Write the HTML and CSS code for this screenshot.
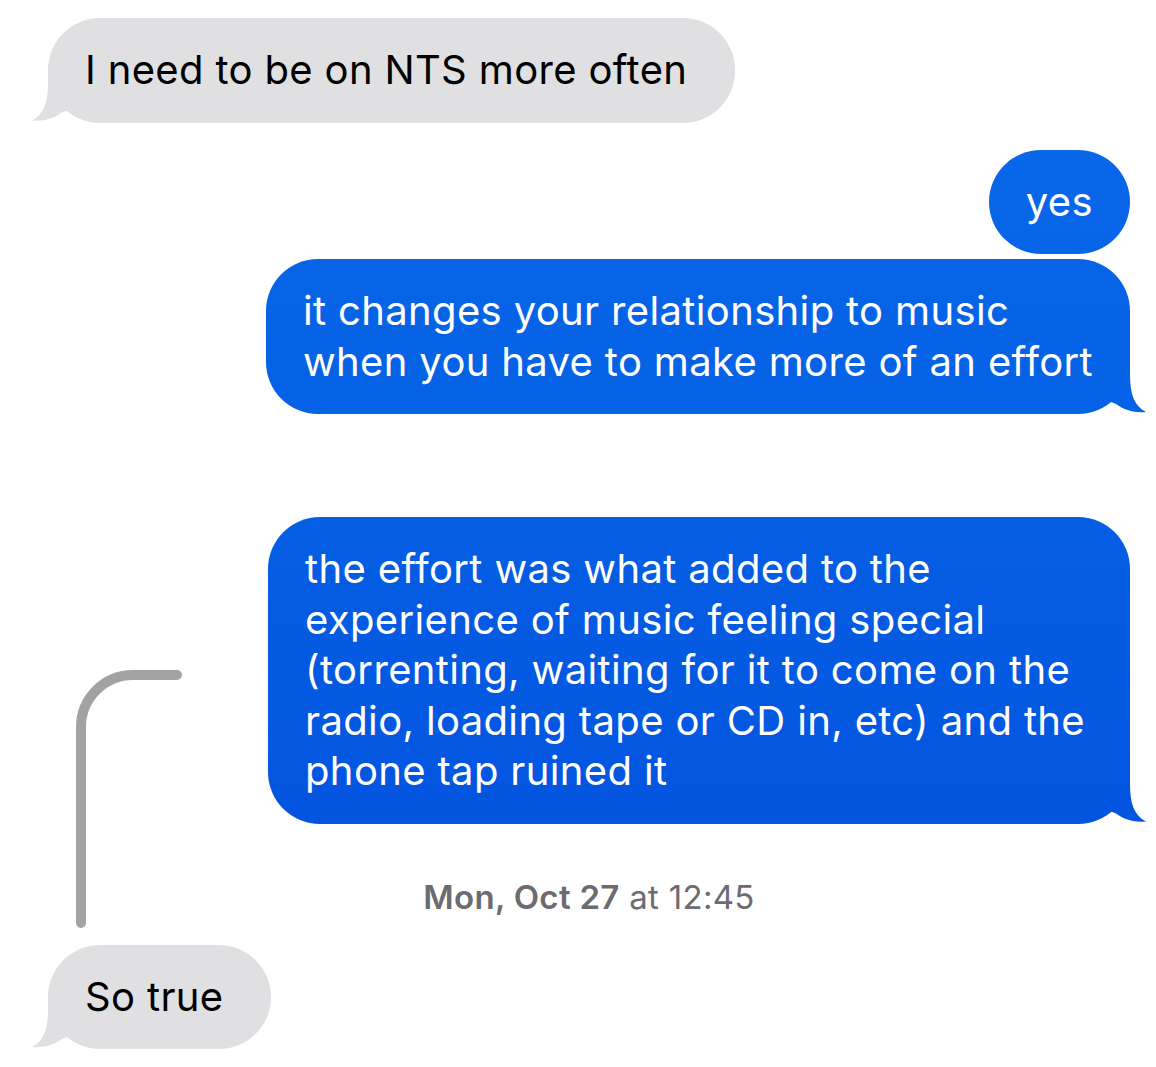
FILE: index.html
```html
<!DOCTYPE html>
<html lang="en">
<head>
<meta charset="utf-8">
<title>Messages</title>
<link rel="stylesheet" href="styles.css">
</head>
<body>
<div class="thread">
  <div class="row row-in first">
    <div class="bubble bubble-in tail">I need to be on NTS more often</div>
  </div>
  <div class="row row-out gap-group">
    <div class="bubble bubble-out">yes</div>
  </div>
  <div class="row row-out gap-tight">
    <div class="bubble bubble-out tail">it changes your relationship to music<br>when you have to make more of an effort</div>
  </div>
  <div class="row row-out gap-reply">
    <div class="bubble bubble-out bubble-wide tail">the effort was what added to the<br>experience of music feeling special<br>(torrenting, waiting for it to come on the<br>radio, loading tape or CD in, etc) and the<br>phone tap ruined it</div>
  </div>
  <div class="stamp"><span class="stamp-day">Mon, Oct 27</span> at 12:45</div>
  <div class="row row-in gap-after-stamp">
    <div class="bubble bubble-in tail">So true</div>
  </div>
  <svg class="reply-line" width="200" height="280" viewBox="0 660 200 280" aria-hidden="true">
    <path d="M177 675 H133 A52 52 0 0 0 81 727 V923" fill="none" stroke="#a2a2a4" stroke-width="10" stroke-linecap="round"/>
  </svg>
</div>
</body>
</html>
```
FILE: styles.css
```css
html, body {
  margin: 0;
  padding: 0;
  background: #ffffff;
}

body {
  font-family: Inter, "Noto Sans", "Liberation Sans", sans-serif;
  -webkit-font-smoothing: antialiased;
}

.thread {
  position: relative;
  display: flex;
  flex-direction: column;
  padding: 18px 26px 0 48px;
  min-height: 1067px;
  box-sizing: border-box;
}

.row {
  display: flex;
}

.row-in {
  justify-content: flex-start;
}

.row-out {
  justify-content: flex-end;
}

.gap-group {
  margin-top: 27px;
}

.gap-tight {
  margin-top: 5px;
}

.gap-reply {
  margin-top: 103px;
}

.gap-after-stamp {
  margin-top: 28px;
}

.bubble {
  position: relative;
  font-size: 40px;
  line-height: 50.5px;
  letter-spacing: 0.35px;
  border-radius: 52px;
  padding: 27px 0;
  white-space: nowrap;
}

.bubble-in {
  background: #e0e0e3;
  color: #000000;
  padding-left: 37px;
  padding-right: 48px;
}

.bubble-out {
  background: linear-gradient(180deg, #0b6aea 0%, #0561e5 40%, #024ddb 100%) fixed;
  color: #ffffff;
  padding-left: 37px;
  padding-right: 37px;
}

.bubble-wide {
  padding-right: 45px;
}

.tail::after {
  content: "";
  position: absolute;
  bottom: 0;
  width: 40px;
  height: 56px;
}

.bubble-in.tail::after {
  left: -16px;
  background: #e0e0e3;
  clip-path: path("M16 0 L16 16 C16 36 12 48 0 54 C12 55 22 52 30 46 L40 42 L40 0 Z");
}

.bubble-out.tail::after {
  right: -16px;
  background: linear-gradient(180deg, #0b6aea 0%, #0561e5 40%, #024ddb 100%) fixed;
  clip-path: path("M24 0 L24 16 C24 36 28 48 40 54 C28 55 18 52 10 46 L0 42 L0 0 Z");
}

.stamp {
  margin-top: 53px;
  text-align: center;
  font-size: 33px;
  line-height: 40px;
  color: #6c6c70;
  letter-spacing: 0.3px;
}

.stamp-day {
  font-weight: 600;
}

.reply-line {
  position: absolute;
  left: 0;
  top: 660px;
}
```
